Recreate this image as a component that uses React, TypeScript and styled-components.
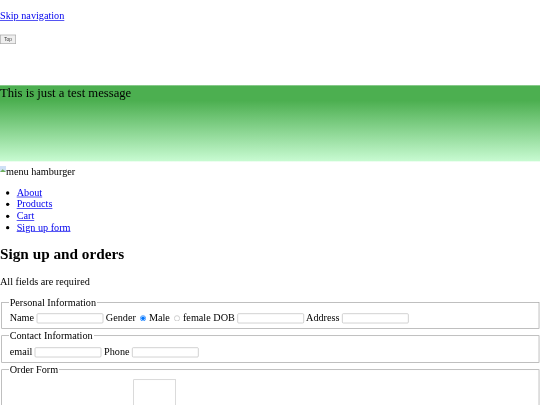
import styled, { createGlobalStyle } from 'styled-components'

const GlobalStyle = createGlobalStyle`
  html, body {
    margin: 0;
    height: 405px;
    overflow: hidden;
    background: white;
  }
`

// the reference is an 810px wide page shrunk down to 540px, hence the soft text
const Page = styled.div`
  width: 810px;
  transform: scale(0.6667);
  transform-origin: 0 0;
  filter: blur(0.4px);
  font-family: 'Liberation Serif', 'Times New Roman', serif;
  font-size: 15.3px;
  line-height: 17.25px;
  color: black;
`

const SkipRow = styled.p`
  margin: 0;
  padding-top: 15px;
`

const TopRow = styled.div`
  margin-top: 19.5px;
  height: 14px;
`

const TopButton = styled.button`
  display: block;
  width: 24px;
  height: 14px;
  padding: 0;
  border: 1px solid #a8a8a8;
  background: #efefef;
  color: #333;
  font-family: 'Liberation Sans', Arial, sans-serif;
  font-size: 7px;
  line-height: 9px;
`

const Message = styled.div`
  height: 114px;
  margin-top: 62.5px;
  font-size: 19px;
  line-height: 21px;
  background: linear-gradient(#4caf50 20%, #c8fbd2 100%);
`

const Hamburger = styled.div`
  margin-top: 7px;
  display: flex;
  align-items: flex-start;
`

const Nav = styled.ul`
  margin: 13.5px 0 0;
  padding-left: 25px;
`

const Heading = styled.h2`
  font-size: 22.9px;
  line-height: 26px;
  margin: 19px 0 0;
`

const Para = styled.p`
  margin: 18.75px 0 0;
`

const Group = styled.fieldset`
  margin: 0 1.5px 2px;
  padding: 5.5px 12px 7px 12px;
  border: 1.5px solid #a0a0a0;

  &:first-of-type {
    margin-top: 14.5px;
  }
`

const Legend = styled.legend`
  margin-left: -2px;
  padding: 0 2px;
`

const Field = styled.input`
  width: 98px;
  height: 13px;
  padding: 0;
  box-sizing: content-box;
  border: 1px solid #bbbbbb;
  border-radius: 2px;
  font-size: 13px;
  vertical-align: -1px;
`

const Radio = styled.input`
  margin: 0 1px 0 2px;
  width: 9px;
  height: 9px;
  vertical-align: -1px;

  &:not(:checked) {
    opacity: 0.5;
  }
`

const Photo = styled.div`
  width: 62px;
  height: 100px;
  margin: 0 0 0 185px;
  border: 1.5px solid #c8c8c8;
`

const BrokenImage = () => (
  <svg width="9" height="16" viewBox="0 0 9 16" aria-hidden="true">
    <path d="M0 0h9v9H0z" fill="#cfe0f6" />
    <path d="M0 9l4-4 5 4z" fill="#6fae5a" />
  </svg>
)

const App = () => {
  return (
    <Page>
      <GlobalStyle />
      <SkipRow>
        <a href="#main">Skip navigation</a>
      </SkipRow>
      <TopRow>
        <TopButton>Top</TopButton>
      </TopRow>
      <Message>This is just a test message</Message>
      <Hamburger>
        <BrokenImage />
        menu hamburger
      </Hamburger>
      <Nav>
        <li><a href="#about">About</a></li>
        <li><a href="#products">Products</a></li>
        <li><a href="#cart">Cart</a></li>
        <li><a href="#form">Sign up form</a></li>
      </Nav>
      <Heading>Sign up and orders</Heading>
      <Para>All fields are required</Para>
      <Group>
        <Legend>Personal Information</Legend>
        Name <Field /> Gender <Radio type="radio" name="gender" defaultChecked /> Male{' '}
        <Radio type="radio" name="gender" /> female DOB <Field /> Address <Field />
      </Group>
      <Group>
        <Legend>Contact Information</Legend>
        email <Field /> Phone <Field />
      </Group>
      <Group>
        <Legend>Order Form</Legend>
        <Photo />
      </Group>
    </Page>
  )
}

export default App
